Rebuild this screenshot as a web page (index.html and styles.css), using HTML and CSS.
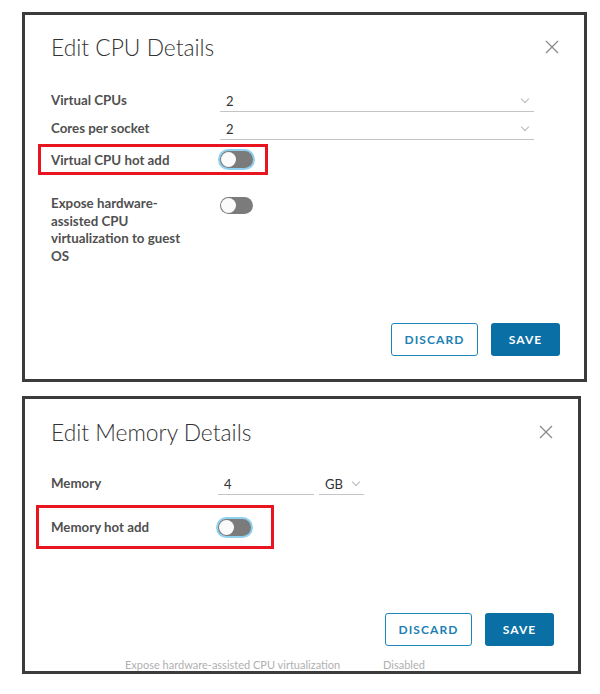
FILE: index.html
```html
<!DOCTYPE html>
<html lang="en">
<head>
    <meta charset="UTF-8">
    <meta name="viewport" content="width=device-width, initial-scale=1.0">
    <title>Edit VM Hardware</title>
    <link rel="stylesheet" href="styles.css">
</head>
<body>
    <!-- CPU dialog -->
    <section class="dialog dialog-cpu">
        <header class="dialog-head">
            <h2>Edit CPU Details</h2>
            <svg class="close" viewBox="0 0 16 16" width="16" height="16">
                <path d="M2 2 L14 14 M14 2 L2 14" stroke="#8a8a8a" stroke-width="1.3" fill="none"/>
            </svg>
        </header>

        <div class="field">
            <label>Virtual CPUs</label>
            <div class="select wide"><span>2</span><i class="chev"></i></div>
        </div>
        <div class="field">
            <label>Cores per socket</label>
            <div class="select wide"><span>2</span><i class="chev"></i></div>
        </div>

        <div class="field marked">
            <label>Virtual CPU hot add</label>
            <span class="toggle focus"></span>
        </div>

        <div class="field multi">
            <label>Expose hardware-assisted CPU virtualization to guest OS</label>
            <span class="toggle"></span>
        </div>

        <footer class="dialog-foot">
            <button class="btn outline">DISCARD</button>
            <button class="btn solid">SAVE</button>
        </footer>
    </section>

    <!-- Memory dialog -->
    <section class="dialog dialog-mem">
        <header class="dialog-head">
            <h2>Edit Memory Details</h2>
            <svg class="close" viewBox="0 0 16 16" width="16" height="16">
                <path d="M2 2 L14 14 M14 2 L2 14" stroke="#8a8a8a" stroke-width="1.3" fill="none"/>
            </svg>
        </header>

        <div class="field">
            <label>Memory</label>
            <div class="select num"><span>4</span></div>
            <div class="select unit"><span>GB</span><i class="chev"></i></div>
        </div>

        <div class="field marked">
            <label>Memory hot add</label>
            <span class="toggle focus"></span>
        </div>

        <footer class="dialog-foot">
            <button class="btn outline">DISCARD</button>
            <button class="btn solid">SAVE</button>
        </footer>
        <!-- page text showing under the modal -->
        <p class="behind">Expose hardware-assisted CPU virtualization <span>Disabled</span></p>
    </section>
</body>
</html>
```

FILE: styles.css
```css
* {
    box-sizing: border-box;
}

body {
    margin: 0;
    background-color: #fff;
    font-family: Lato, "Open Sans", sans-serif;
    color: #3a3a3a;
}

.dialog {
    position: relative;
    display: flex;
    flex-direction: column;
    margin-left: 22px;
    border: 3px solid #3b3b3b;
    background-color: #fff;
    padding-left: 26px;
}

.dialog-cpu {
    margin-top: 12px;
    width: 565px;
    height: 370px;
    padding-top: 17px;
}

.dialog-mem {
    margin-top: 14px;
    width: 559px;
    height: 278px;
    padding-top: 18px;
}

.dialog-head {
    display: flex;
    justify-content: space-between;
    align-items: center;
    padding-right: 24px;
    height: 30px;
    margin-bottom: 26px;
}

.dialog-mem .dialog-head {
    margin-bottom: 24px;
}

.dialog-head h2 {
    margin: 0;
    font-size: 22.8px;
    font-weight: 300;
    color: #333;
}

.close {
    width: 16px;
    height: 16px;
}

/* form rows */
.field {
    display: flex;
    align-items: center;
    margin-bottom: 4px;
}

.field label {
    width: 169px;
    flex-shrink: 0;
    font-size: 13.3px;
    font-weight: 700;
    color: #505050;
}

.dialog-mem .field label {
    width: 167px;
}

.select {
    display: flex;
    align-items: center;
    justify-content: space-between;
    height: 24px;
    padding: 2px 6px 0;
    border-bottom: 1px solid #c4c4c4;
    font-size: 13px;
    color: #333;
}

.select.wide {
    width: 314px;
}

.select.num {
    width: 96px;
}

.select.unit {
    width: 45px;
    margin-left: 5px;
    padding-right: 5px;
}

.chev {
    width: 6px;
    height: 6px;
    margin-top: -4px;
    border-right: 1px solid #b8b8b8;
    border-bottom: 1px solid #b8b8b8;
    transform: rotate(45deg);
}

/* the red highlight around the hot add row */
.field.marked {
    width: 230px;
    height: 31px;
    margin: 0 0 20px -13px;
    padding-left: 10px;
    border: 3px solid #e8141f;
}

.dialog-mem .field.marked {
    width: 238px;
    height: 44px;
    margin-top: 6px;
    margin-left: -15px;
    padding-left: 12px;
}

.field.multi {
    align-items: flex-start;
}

.field.multi label {
    width: 142px;
    margin-right: 27px;
    line-height: 17.7px;
}

.field.multi .toggle {
    margin-top: 2px;
}

.toggle {
    position: relative;
    display: inline-block;
    width: 33px;
    height: 17px;
    border-radius: 9px;
    background-color: #7b7b7b;
}

.toggle::after {
    content: "";
    position: absolute;
    left: 1px;
    top: 1px;
    width: 15px;
    height: 15px;
    border-radius: 50%;
    background-color: #fafafa;
}

.toggle.focus {
    box-shadow: 0 0 0 2px #8fd0ee;
}

/* buttons */
.dialog-foot {
    display: flex;
    justify-content: flex-end;
    gap: 13px;
    margin-top: auto;
    padding-right: 24px;
    padding-bottom: 23px;
}

.dialog-mem .dialog-foot {
    padding-bottom: 25px;
}

.btn {
    height: 33px;
    border-radius: 3px;
    font-family: inherit;
    font-size: 12px;
    font-weight: 700;
    letter-spacing: 1.1px;
}

.btn.outline {
    width: 87px;
    border: 1px solid #1d87bd;
    background-color: #fff;
    color: #1d7fb3;
}

.btn.solid {
    width: 69px;
    border: none;
    background-color: #0a6fa4;
    color: #fff;
}

.behind {
    position: absolute;
    left: 100px;
    bottom: 0;
    margin: 0;
    font-size: 11px;
    line-height: 12px;
    color: #b0b0b0;
}

.behind span {
    margin-left: 40px;
}
```
